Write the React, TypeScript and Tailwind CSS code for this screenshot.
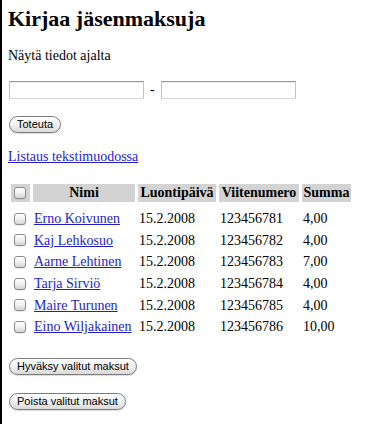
import React from "react";

const rows = [
  { name: "Erno Koivunen", date: "15.2.2008", ref: "123456781", sum: "4,00" },
  { name: "Kaj Lehkosuo", date: "15.2.2008", ref: "123456782", sum: "4,00" },
  { name: "Aarne Lehtinen", date: "15.2.2008", ref: "123456783", sum: "7,00" },
  { name: "Tarja Sirviö", date: "15.2.2008", ref: "123456784", sum: "4,00" },
  { name: "Maire Turunen", date: "15.2.2008", ref: "123456785", sum: "4,00" },
  { name: "Eino Wiljakainen", date: "15.2.2008", ref: "123456786", sum: "10,00" },
];

function Check() {
  return (
    <span className="ml-[3px] block w-[12px] h-[12px] rounded-[3px] border border-[#8c8c8c] bg-gradient-to-b from-[#ffffff] via-[#f0f0f0] to-[#d4d4d4] shadow-[0_1px_0_rgba(0,0,0,0.08)]" />
  );
}

function AquaButton({ children }: { children: React.ReactNode }) {
  return (
    <button
      type="button"
      className="ml-px flex h-[17px] items-center rounded-full border border-[#7d7d7d] bg-gradient-to-b from-[#ffffff] via-[#f2f2f2] to-[#d9d9d9] px-[7px] text-[11px] leading-none text-black shadow-[0_1px_1px_rgba(0,0,0,0.15)]"
      style={{ fontFamily: '"Liberation Sans", Arial, sans-serif' }}
    >
      {children}
    </button>
  );
}

export default function App() {
  return (
    <div
      className="w-[371px] h-[433px] bg-white text-black"
      style={{ fontFamily: '"Liberation Serif", "Times New Roman", serif' }}
    >
      <div className="h-[424px] border-l-2 border-black pl-[6px]">
        <h1 className="pt-[6px] text-[22px] leading-[26px] font-bold">Kirjaa jäsenmaksuja</h1>
        <p className="mt-[16px] text-[14px] leading-[16px]">Näytä tiedot ajalta</p>
        <div className="mt-[17px] ml-px flex items-center gap-[6px]">
          <input
            type="text"
            className="h-[18px] w-[135px] border border-t-[#9a9a9a] border-x-[#c4c4c4] border-b-[#dadada] bg-white shadow-[inset_0_1px_1px_rgba(0,0,0,0.08)] outline-none"
          />
          <span className="text-[14px] leading-[16px]">-</span>
          <input
            type="text"
            className="h-[18px] w-[135px] border border-t-[#9a9a9a] border-x-[#c4c4c4] border-b-[#dadada] bg-white shadow-[inset_0_1px_1px_rgba(0,0,0,0.08)] outline-none"
          />
        </div>
        <div className="mt-[17px]">
          <AquaButton>Toteuta</AquaButton>
        </div>
        <div className="mt-[16px] text-[14px] leading-[16px]">
          <a href="#" className="text-[#1e1ecc] underline">
            Listaus tekstimuodossa
          </a>
        </div>
        <table className="mt-[19px] w-[346px] table-fixed border-separate border-spacing-x-[3px] border-spacing-y-0 text-[14px]">
          <thead>
            <tr className="h-[18px]">
              <th className="w-[19px] bg-[#d3d3d3] p-0 align-middle">
                <Check />
              </th>
              <th className="w-[102px] bg-[#d3d3d3] p-0 text-center font-bold leading-[18px] whitespace-nowrap">Nimi</th>
              <th className="w-[78px] bg-[#d3d3d3] p-0 text-center font-bold leading-[18px] whitespace-nowrap">Luontipäivä</th>
              <th className="w-[80px] bg-[#d3d3d3] p-0 text-center font-bold leading-[18px] whitespace-nowrap">Viitenumero</th>
              <th className="w-[49px] bg-[#d3d3d3] p-0 text-center font-bold leading-[18px] whitespace-nowrap">Summa</th>
            </tr>
          </thead>
          <tbody>
            <tr className="h-[6px]">
              <td colSpan={5} className="p-0" />
            </tr>
            {rows.map((r) => (
              <tr key={r.ref} className="h-[21.6px]">
                <td className="p-0 align-middle">
                  <Check />
                </td>
                <td className="px-px py-0 align-middle whitespace-nowrap">
                  <a href="#" className="text-[#1e1ecc] underline">
                    {r.name}
                  </a>
                </td>
                <td className="px-px py-0 align-middle whitespace-nowrap">{r.date}</td>
                <td className="px-px py-0 align-middle whitespace-nowrap">{r.ref}</td>
                <td className="px-px py-0 align-middle whitespace-nowrap">{r.sum}</td>
              </tr>
            ))}
          </tbody>
        </table>
        <div className="mt-[20px]">
          <AquaButton>Hyväksy valitut maksut</AquaButton>
        </div>
        <div className="mt-[18px]">
          <AquaButton>Poista valitut maksut</AquaButton>
        </div>
      </div>
    </div>
  );
}
